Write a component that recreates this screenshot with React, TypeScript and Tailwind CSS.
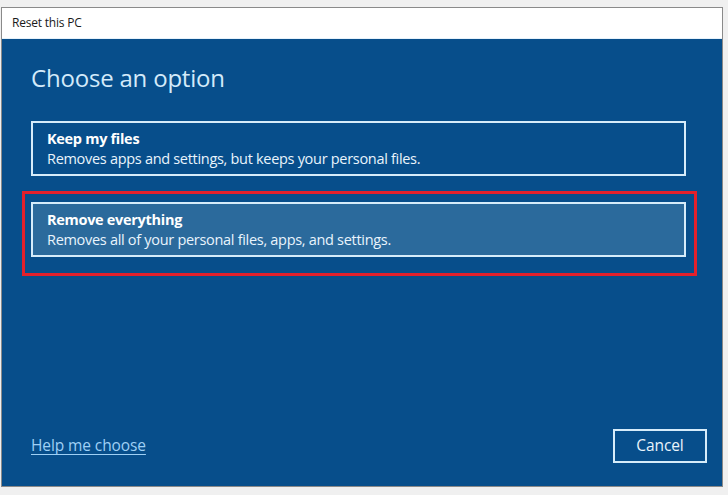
const options = [
  { title: "Keep my files", desc: "Removes apps and settings, but keeps your personal files.", selected: false },
  { title: "Remove everything", desc: "Removes all of your personal files, apps, and settings.", selected: true },
];

const App = () => {
  return (
    <div
      className="w-[728px] h-[495px] bg-[#f0f0f0] pt-[7px] pl-[1px] overflow-hidden"
      style={{ fontFamily: '"Open Sans", "Noto Sans", sans-serif' }}
    >
      <div className="w-[722px] border border-[#8a8a8a] flex flex-col">
        <div className="h-[31px] bg-white flex items-center px-[10px] border-b border-[#e6f2fb]">
          <p className="text-[12px] text-[#1a1a1a] tracking-[-0.2px]">Reset this PC</p>
        </div>

        <div className="h-[447px] bg-[#074e8b] flex flex-col px-[29px]">
          <h1 className="mt-[19px] text-[24px] leading-[40px] text-[#d3eafa] tracking-[-0.2px]">
            Choose an option
          </h1>

          <div className="mt-[23px] flex flex-col gap-[26px]">
            {options.map((o) => (
              <div
                key={o.title}
                className={
                  o.selected
                    ? "self-start -ml-[9px] -mt-[11px] -mb-[19px] pl-[6px] pr-[8px] pt-[8px] pb-[16px] border-[3px] border-[#e3202b]"
                    : "self-start"
                }
              >
                <div
                  className={
                    "w-[655px] h-[55px] border-2 border-[#d6ecfa] px-[14px] pt-[6px] flex flex-col " +
                    (o.selected ? "bg-[#2b6a9c]" : "")
                  }
                >
                  <p className="text-[14.5px] font-bold leading-[20px] text-white tracking-[-0.3px]">{o.title}</p>
                  <p className="text-[14.5px] leading-[20px] text-[#e9f4fc] tracking-[-0.3px]">{o.desc}</p>
                </div>
              </div>
            ))}
          </div>

          <div className="mt-auto mb-[23px] flex items-center justify-between">
            <a href="#" className="text-[15.5px] text-[#9fd0f5] underline underline-offset-[3px] tracking-[-0.1px]">
              Help me choose
            </a>
            <button className="w-[94px] h-[34px] border-2 border-[#d6ecfa] text-[15.5px] text-[#e9f4fc] mr-[-14px] tracking-[-0.1px]">
              Cancel
            </button>
          </div>
        </div>
      </div>
    </div>
  );
};

export default App;
